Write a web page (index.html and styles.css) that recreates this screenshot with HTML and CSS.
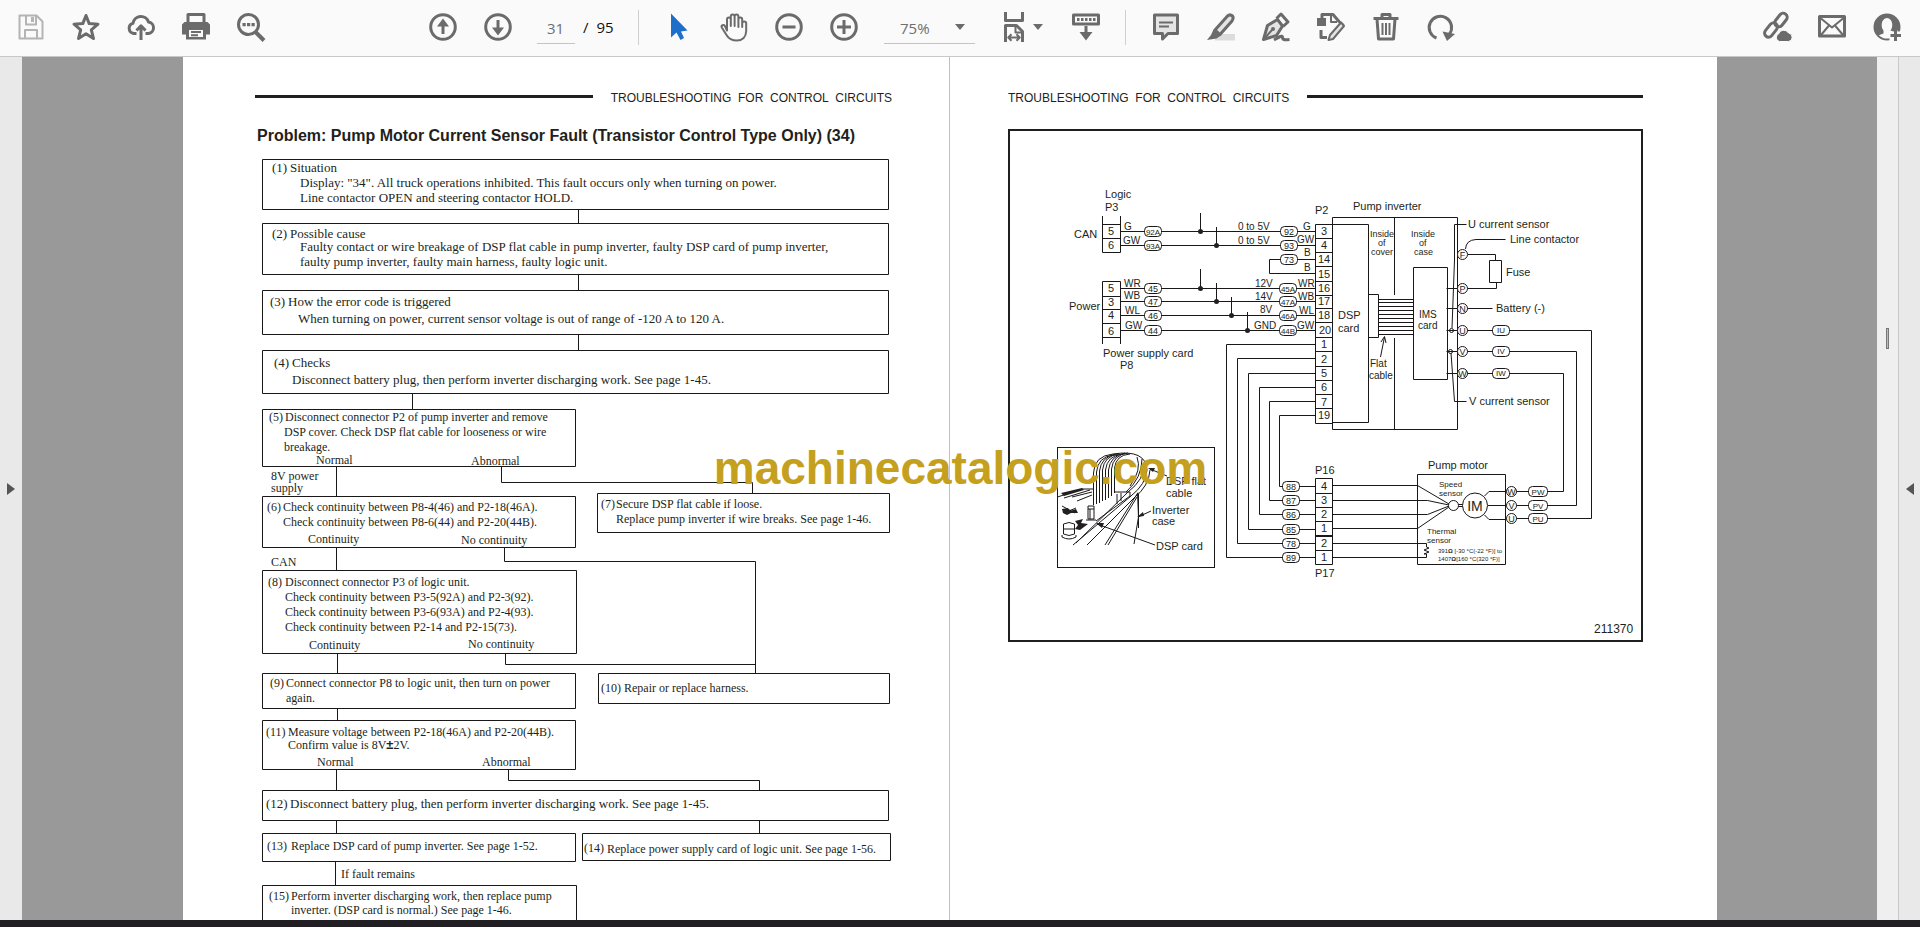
FILE: index.html
```html
<!DOCTYPE html>
<html lang="en">
<head>
<meta charset="utf-8">
<title>Service manual - page 31</title>
<link rel="stylesheet" href="styles.css">
</head>
<body>
<div class="app">
  <header class="toolbar">
    <div class="group">
      <button class="tool tool-off" aria-label="Save"><svg viewBox="0 0 28 28"><path class="ln" d="M2.500 2.500H19.500L25.500 8.500V25.500H2.500Z"/><path class="ln" d="M9 3V11.500H19V3"/><path class="fl" d="M14 4h3v5h-3z"/><path class="ln" d="M8 25V17H20V25"/></svg></button>
      <button class="tool" aria-label="Star"><svg viewBox="0 0 28 28"><path class="ln3" d="M14 2.500L17.200 10.600L26 11.200L19.300 16.800L21.500 25.500L14 20.700L6.500 25.500L8.700 16.800L2 11.200L10.800 10.600Z"/></svg></button>
      <button class="tool" aria-label="Upload to cloud"><svg viewBox="0 0 28 28"><path class="ln3" d="M9.500 20.500H6.500A5.300 5.300 0 0 1 6 10.200A8 8 0 0 1 21.500 9A5.800 5.800 0 0 1 21.500 20.500H18.500"/><path class="ln3" d="M14 27V14M9.500 17.500L14 12.800L18.500 17.500"/></svg></button>
      <button class="tool" aria-label="Print"><svg viewBox="0 0 28 28"><path class="ln3" d="M6 10V1.500H22V10"/><path class="fl" d="M2.500 9H25.500L28 11.500V21.500H24V26.500H4V21.500H0V11.500Z"/><path class="wh" d="M7 17h14v7H7z"/><path class="ln" d="M9 19h10M9 22.200h7"/></svg></button>
      <button class="tool" aria-label="Search"><svg viewBox="0 0 28 28"><circle class="ln3" cx="11.500" cy="11.500" r="10"/><path class="ln4" d="M18.500 19L27 27.500"/><path class="fl" d="M5.500 10h3.200v3.200H5.500zM10 10h3.200v3.200H10zM14.500 10h3.200v3.200h-3.200z"/></svg></button>
    </div>
    <div class="group group-nav">
      <button class="tool" aria-label="Previous page"><svg viewBox="0 0 28 28"><circle class="ln3" cx="14" cy="14" r="12.300"/><path class="ln3" d="M14 21V9"/><path class="fl" d="M14 5.500L20 13.500H8Z"/></svg></button>
      <button class="tool" aria-label="Next page"><svg viewBox="0 0 28 28"><circle class="ln3" cx="14" cy="14" r="12.300"/><path class="ln3" d="M14 7V19"/><path class="fl" d="M14 22.500L20 14.500H8Z"/></svg></button>
      <input class="page-no" type="text" value="31" aria-label="Page number">
      <span class="page-total"><span>/</span><span>95</span></span>
      <span class="sep"></span>
      <button class="tool tool-on" aria-label="Select"><svg viewBox="0 0 28 28"><path class="fl" d="M6 .500V24.500L11.500 19.500L15.500 27L19 25L16 18.500L22.500 17.500Z"/></svg></button>
      <button class="tool" aria-label="Hand"><svg viewBox="0 0 28 28"><path class="ln" d="M7 17.500V6.500a1.900 1.900 0 0 1 3.800 0V13V3.500a1.900 1.900 0 0 1 3.800 0V13V3.500a1.900 1.900 0 0 1 3.800 0V14V6.500a1.900 1.900 0 0 1 3.800 0V14V10.500a2 2 0 0 1 4 0V18C26 24 22.500 27.500 17 27.500C11 27.500 8.500 25.500 6.500 22L1.800 14.500C.800 12.500 3.500 11 5 13Z"/></svg></button>
      <button class="tool" aria-label="Zoom out"><svg viewBox="0 0 28 28"><circle class="ln3" cx="14" cy="14" r="12.300"/><path class="ln3" d="M7.500 14h13"/></svg></button>
      <button class="tool" aria-label="Zoom in"><svg viewBox="0 0 28 28"><circle class="ln3" cx="14" cy="14" r="12.300"/><path class="ln3" d="M7 14h14M14 7v14"/></svg></button>
      <span class="zoom"><select aria-label="Zoom level"><option>75%</option><option>100%</option></select><svg class="caret" viewBox="0 0 10 6"><path class="fl" d="M0 0H10L5 6Z"/></svg></span>
      <button class="tool tool-fit" aria-label="Page fit"><svg viewBox="0 0 28 28"><path class="ln3" d="M4.500 -1V7.500H21.500V-1"/><path class="ln3" d="M4.500 29V12.500H15.500L21.500 18.500V29"/><path class="ln" d="M14.500 13v6.500H21M7.500 24.500h11M10.500 21.300L7.300 24.500L10.500 27.700M15.500 21.300L18.700 24.500L15.500 27.700"/></svg><svg class="caret" viewBox="0 0 10 6"><path class="fl" d="M0 0H10L5 6Z"/></svg></button>
      <button class="tool" aria-label="Scroll mode"><svg viewBox="0 0 28 28"><rect class="ln3" x="1.500" y="2" width="25" height="9"/><path class="fl" d="M5 5h2.500v3H5zM9 5h2.500v3H9zM13 5h2.500v3H13zM17 5h2.500v3H17zM21 5h2.500v3H21z"/><path class="ln3" d="M14 13V23"/><path class="fl" d="M7.500 19H20.500L14 27.500Z"/></svg></button>
      <span class="sep"></span>
      <button class="tool" aria-label="Comment"><svg viewBox="0 0 28 28"><path class="ln3 lt" d="M2.500 2H25.500V20.500H16L10.500 26V20.500H2.500Z"/><path class="ln" d="M7 9.500h14M7 13.500h10"/></svg></button>
      <button class="tool" aria-label="Highlight"><svg viewBox="0 0 28 28"><path class="pale" d="M8 21H28V27.500H8Z"/><path class="ln3 lt" d="M8 17L20.500 3Q23 .800 25.500 3Q27 5 25 8L13 21.500Z"/><path class="fl" d="M6.500 16.500L14 22.500L9.500 25.500L0 27L4 22Z"/></svg></button>
      <button class="tool" aria-label="Sign"><svg viewBox="0 0 28 28"><path class="ln3 lt" d="M1.500 26.500L5.500 12.500L15.500 6.500L20.500 13L14.500 22.500Z"/><path class="ln3" d="M14.500 5.500L19 1L26 9L21 13.500"/><path class="ln" d="M2 26L10 17"/><circle class="fl" cx="11" cy="16" r="2"/><path class="ln3" d="M12 27C17 24 20 22 20.500 24C20.500 27 22 27 27.500 26.500"/></svg></button>
      <button class="tool" aria-label="Edit file"><svg viewBox="0 0 28 28"><path class="ln3" d="M5 5V1.500H16L22 8.500L26.500 12.500"/><path class="fl" d="M0 5H9V13H0z"/><path class="ln" d="M14 2V9H20"/><path class="ln3" d="M4 17V24.500H10"/><path class="ln lt" d="M13 22L24 9.500L27 13L16 26L11.500 27Z"/></svg></button>
      <button class="tool" aria-label="Delete"><svg viewBox="0 0 28 28"><path class="ln3" d="M1.500 5.500H26.500M10 5V1.500H18V5M5 6L6.500 26H21.500L23 6"/><path class="ln" d="M10.500 10V22M14 10V22M17.500 10V22"/></svg></button>
      <button class="tool" aria-label="Rotate"><svg viewBox="0 0 28 28"><path class="ln3" d="M9.500 25A11.200 11.200 0 1 1 22.500 21"/><path class="fl" d="M15.500 18.500L28 21L20 28Z"/></svg></button>
    </div>
    <div class="group group-end">
      <button class="tool" aria-label="Share link"><svg viewBox="0 0 28 28"><rect class="ln3" x="10.500" y="3" width="15" height="8" rx="4" transform="rotate(-52 18 7)"/><rect class="ln3" x="0" y="13" width="16" height="8" rx="4" transform="rotate(-52 8 17)"/><path class="fl" stroke="#fafafa" d="M16.500 28.500A4 4 0 0 1 15.500 21A5.500 5.500 0 0 1 25.500 20A4.300 4.300 0 0 1 25.500 28.500Z"/></svg></button>
      <button class="tool" aria-label="E-mail"><svg viewBox="0 0 28 28"><path class="ln3" d="M1.500 3.500H26.500V23H1.500Z"/><path class="ln" d="M3 5.500L14 14.500L25 5.500M3 22L11 12.500M25 22L17 12.500"/></svg></button>
      <button class="tool" aria-label="Add people"><svg viewBox="0 0 28 28"><circle class="ln" cx="14" cy="14" r="12.500"/><path class="fl" d="M11 26C3 24 .500 18 1.500 12C2.500 5 8 1 14 1.500C21 1 26 6 26.500 13L26 17L21 19L17.500 17.500C20.500 14 20 5.500 14 5C8 5.500 7.500 14 10.500 17.500V20.500L5 22.500Z"/><path class="wh" d="M16.500 18.500H28V28H16.500z"/><path class="ln3" d="M22.500 17.500V28M17.500 22.500H28"/></svg></button>
    </div>
  </header>

  <main class="workspace">
    <button class="rail" aria-label="Open left pane"><svg viewBox="0 0 8 12"><path class="fl" d="M0 0V12L8 6Z"/></svg></button>
    <div class="viewport">
      <article class="page page-left">
        <div class="running-head"><span class="rule"></span><span>TROUBLESHOOTING&nbsp; FOR&nbsp; CONTROL&nbsp; CIRCUITS</span></div>
        <h1 class="title">Problem: Pump Motor Current Sensor Fault (Transistor Control Type Only) (34)</h1>
        <svg class="figure flow" viewBox="255 157 637 763" role="img" aria-label="Troubleshooting flowchart">
          <g class="box">
            <path d="M262.500 159.500H888.500V209.500H262.500ZM262.500 223.500H888.500V274.500H262.500ZM262.500 290.500H888.500V334.500H262.500ZM262.500 350.500H888.500V393.500H262.500Z"/>
            <path d="M262.500 409.500H575.500V466.500H262.500ZM262.500 496.500H575.500V547.500H262.500ZM597.500 493.500H889.500V532.500H597.500ZM262.500 570.500H576.500V653.500H262.500Z"/>
            <path d="M262.500 673.500H575.500V708.500H262.500ZM598.500 673.500H889.500V703.500H598.500ZM262.500 720.500H575.500V769.500H262.500ZM262.500 790.500H888.500V820.500H262.500Z"/>
            <path d="M262.500 833.500H575.500V861.500H262.500ZM582.500 833.500H890.500V860.500H582.500ZM262.500 885.500H576.500V930H262.500Z"/>
            <path d="M578.500 209.500V223.500M578.500 274.500V290.500M578.500 334.500V350.500M412.500 393.500V409.500M336.500 466.500V496.500M501.500 466.500V482.500H752.500V493.500"/>
            <path d="M336.500 547.500V570.500M504.500 547.500V561.500H755.500V673.500M337.500 653.500V673.500M505.500 653.500V664.500H755.500M337.500 708.500V720.500"/>
            <path d="M336.500 769.500V790.500M508.500 769.500V780.500H759.500V790.500M336.500 820.500V833.500M759.500 820.500V833.500M335.500 861.500V885.500"/>
          </g>
          <g class="wide">
            <text x="272" y="172">(1)</text><text x="290" y="172">Situation</text>
            <text x="300" y="187">Display: "34". All truck operations inhibited. This fault occurs only when turning on power.</text>
            <text x="300" y="202">Line contactor OPEN and steering contactor HOLD.</text>
            <text x="272" y="238">(2)</text><text x="290" y="238">Possible cause</text>
            <text x="300" y="251">Faulty contact or wire breakage of DSP flat cable in pump inverter, faulty DSP card of pump inverter,</text>
            <text x="300" y="266">faulty pump inverter, faulty main harness, faulty logic unit.</text>
            <text x="270" y="306">(3)</text><text x="288" y="306">How the error code is triggered</text>
            <text x="298" y="323">When turning on power, current sensor voltage is out of range of -120 A to 120 A.</text>
            <text x="274" y="367">(4)</text><text x="292" y="367">Checks</text>
            <text x="292" y="384">Disconnect battery plug, then perform inverter discharging work. See page 1-45.</text>
            <text x="266" y="808">(12)</text><text x="290" y="808">Disconnect battery plug, then perform inverter discharging work. See page 1-45.</text>
          </g>
          <g>
            <text x="269" y="421">(5)</text><text x="285" y="421">Disconnect connector P2 of pump inverter and remove</text>
            <text x="284" y="436">DSP cover. Check DSP flat cable for looseness or wire</text>
            <text x="284" y="451">breakage.</text>
            <text x="316" y="464">Normal</text><text x="471" y="465">Abnormal</text>
            <text x="271" y="480">8V power</text><text x="271" y="492">supply</text>
            <text x="267" y="511">(6)</text><text x="283" y="511">Check continuity between P8-4(46) and P2-18(46A).</text>
            <text x="283" y="526">Check continuity between P8-6(44) and P2-20(44B).</text>
            <text x="308" y="543">Continuity</text><text x="461" y="544">No continuity</text>
            <text x="601" y="508">(7)</text><text x="616" y="508">Secure DSP flat cable if loose.</text>
            <text x="616" y="523">Replace pump inverter if wire breaks. See page 1-46.</text>
            <text x="271" y="566">CAN</text>
            <text x="268" y="586">(8)</text><text x="285" y="586">Disconnect connector P3 of logic unit.</text>
            <text x="285" y="601">Check continuity between P3-5(92A) and P2-3(92).</text>
            <text x="285" y="616">Check continuity between P3-6(93A) and P2-4(93).</text>
            <text x="285" y="631">Check continuity between P2-14 and P2-15(73).</text>
            <text x="309" y="649">Continuity</text><text x="468" y="648">No continuity</text>
            <text x="270" y="687">(9)</text><text x="286" y="687">Connect connector P8 to logic unit, then turn on power</text>
            <text x="286" y="702">again.</text>
            <text x="601" y="692">(10)</text><text x="624" y="692">Repair or replace harness.</text>
            <text x="266" y="736">(11)</text><text x="288" y="736">Measure voltage between P2-18(46A) and P2-20(44B).</text>
            <text x="288" y="749">Confirm value is 8V<tspan class="pm">±</tspan>2V.</text>
            <text x="317" y="766">Normal</text><text x="482" y="766">Abnormal</text>
            <text x="267" y="850">(13)</text><text x="291" y="850">Replace DSP card of pump inverter. See page 1-52.</text>
            <text x="584" y="852">(14)</text><text x="607" y="853">Replace power supply card of logic unit. See page 1-56.</text>
            <text x="341" y="878">If fault remains</text>
            <text x="269" y="900">(15)</text><text x="291" y="900">Perform inverter discharging work, then replace pump</text>
            <text x="291" y="914">inverter. (DSP card is normal.) See page 1-46.</text>
          </g>
        </svg>
      </article>
      <article class="page page-right">
        <div class="running-head"><span>TROUBLESHOOTING&nbsp; FOR&nbsp; CONTROL&nbsp; CIRCUITS</span><span class="rule"></span></div>
        <svg class="figure circuit" viewBox="1008 128 635 515" role="img" aria-label="Pump inverter circuit diagram">
          <rect class="frame" x="1009" y="130" width="633" height="511"/>
          <g class="wire">
            <path d="M1102.500 216V252.500H1120.500V216M1102.500 224.500H1120.500M1102.500 238.500H1120.500"/>
            <path d="M1102.500 344V281.500H1120.500V344M1102.500 296.500H1120.500M1102.500 309.500H1120.500M1102.500 323.500H1120.500M1102.500 337.500H1120.500"/>
            <path d="M1120.500 231.500H1315.500M1120.500 245.500H1315.500M1315.500 259.500H1269.500V273.500H1315.500M1120.500 288.500H1315.500M1120.500 301.500H1315.500M1120.500 315.500H1315.500M1120.500 330.500H1315.500"/>
            <path d="M1200.500 213V231M1216.500 227V245M1200.500 269V288M1216.500 283V301M1231.500 297V315M1247.500 312V330"/>
            <path d="M1315.500 224.500H1332.500V423.500H1315.500ZM1315.500 238.500h17M1315.500 252.500h17M1315.500 266.500h17M1315.500 281.500h17M1315.500 295.500h17M1315.500 308.500h17M1315.500 322.500h17M1315.500 337.500h17M1315.500 351.500h17M1315.500 366.500h17M1315.500 380.500h17M1315.500 394.500h17M1315.500 408.500h17"/>
            <path d="M1315.500 344.500H1226.500V557.500H1315.500M1315.500 358.500H1237.500V543.500H1315.500M1315.500 373.500H1248.500V529.500H1315.500M1315.500 387.500H1259.500V514.500H1315.500M1315.500 401.500H1269.500V500.500H1315.500M1315.500 415.500H1279.500V486.500H1315.500"/>
            <path d="M1315.500 478.500H1332.500V564.500H1315.500ZM1315.500 493.500h17M1315.500 507.500h17M1315.500 521.500h17M1315.500 535.500h17M1315.500 536.500h17M1315.500 550.500h17"/>
            <path d="M1332.500 217.500H1457.500V429.500H1332.500ZM1332.500 224.500H1368.500V422.500H1332.500M1394.500 217.500V295M1394.500 338V429.500M1368.500 294.500H1378.500V337.500H1368.500M1413.500 267.500H1447.500V379.500H1413.500Z"/>
            <path d="M1378.500 299.500h35M1378.500 302.500h35M1378.500 306.500h35M1378.500 310.500h35M1378.500 314.500h35M1378.500 318.500h35M1378.500 322.500h35M1378.500 326.500h35M1378.500 330.500h35M1378.500 334.500h35"/>
            <path d="M1380.500 357L1384.500 337M1381 342L1384.500 336.500L1386 343"/>
            <path d="M1466.500 224.500H1454.500V260L1452 328M1466.500 401.500H1454.500L1451 353M1505.500 239.500H1476Q1466 240 1465.500 249"/>
            <path d="M1468 254.500H1495.500V260.500M1489.500 260.500H1501.500V282.500H1489.500ZM1446.500 288.500H1496.500V282.500M1446.500 308.500H1492.500M1446.500 330.500H1591.500V518.500H1506M1446.500 351.500H1576.500V505.500H1488M1446.500 373.500H1563.500V491.500H1489L1484.500 496M1506 519.500H1489L1484.500 515"/>
            <circle cx="1451.500" cy="330.500" r="2"/><circle cx="1450.500" cy="351.500" r="2"/>
            <path d="M1417.500 474.500H1505.500V564.500H1417.500ZM1332.500 485.500H1417.500L1449 504M1332.500 500.500H1427.500L1449 505M1332.500 514.500H1427.500L1449 506M1332.500 528.500H1417.500L1449 507"/>
            <path d="M1458 504.500H1463M1458 506.500H1463M1332.500 543.500H1426.500V547L1429 548L1424 550L1429 552L1424 554H1426.500V557.500H1332.500"/>
          </g>
          <g class="dot"><circle cx="1200.500" cy="231.500" r="2.500"/><circle cx="1216.500" cy="245.500" r="2.500"/><circle cx="1200.500" cy="288.500" r="2.500"/><circle cx="1216.500" cy="301.500" r="2.500"/><circle cx="1231.500" cy="315.500" r="2.500"/><circle cx="1247.500" cy="330.500" r="2.500"/></g>
          <g class="node">
            <rect x="1144.500" y="226.500" width="17" height="10" rx="4"/><rect x="1144.500" y="240.500" width="17" height="10" rx="4"/>
            <rect x="1144.500" y="283.500" width="17" height="10" rx="4"/><rect x="1144.500" y="296.500" width="17" height="10" rx="4"/><rect x="1144.500" y="310.500" width="17" height="10" rx="4"/><rect x="1144.500" y="325.500" width="17" height="10" rx="4"/>
            <rect x="1280.500" y="226.500" width="17" height="10" rx="4"/><rect x="1280.500" y="240.500" width="17" height="10" rx="4"/><rect x="1280.500" y="254.500" width="17" height="10" rx="4"/>
            <rect x="1279.500" y="283.500" width="17" height="10" rx="4"/><rect x="1279.500" y="296.500" width="17" height="10" rx="4"/><rect x="1279.500" y="310.500" width="17" height="10" rx="4"/><rect x="1279.500" y="325.500" width="17" height="10" rx="4"/>
            <rect x="1282.500" y="481.500" width="17" height="10" rx="4"/><rect x="1282.500" y="495.500" width="17" height="10" rx="4"/><rect x="1282.500" y="509.500" width="17" height="10" rx="4"/><rect x="1282.500" y="524.500" width="17" height="10" rx="4"/><rect x="1282.500" y="538.500" width="17" height="10" rx="4"/><rect x="1282.500" y="552.500" width="17" height="10" rx="4"/>
            <rect x="1492.500" y="325.500" width="17" height="10" rx="4"/><rect x="1492.500" y="346.500" width="17" height="10" rx="4"/><rect x="1492.500" y="368.500" width="17" height="10" rx="4"/>
            <rect x="1528.500" y="486.500" width="19" height="10" rx="4"/><rect x="1528.500" y="500.500" width="19" height="10" rx="4"/><rect x="1528.500" y="513.500" width="19" height="10" rx="4"/>
            <circle cx="1462.500" cy="254.500" r="5"/><circle cx="1462.500" cy="288.500" r="5"/><circle cx="1462.500" cy="308.500" r="5"/><circle cx="1462.500" cy="330.500" r="5"/><circle cx="1462.500" cy="351.500" r="5"/><circle cx="1462.500" cy="373.500" r="5"/>
            <circle cx="1511.500" cy="491.500" r="5"/><circle cx="1511.500" cy="505.500" r="5"/><circle cx="1511.500" cy="518.500" r="5"/>
            <circle cx="1453.500" cy="505.500" r="5"/><circle cx="1475" cy="505.500" r="12.500"/>
          </g>
          <g class="t9 mid">
            <text x="1153" y="292">45</text><text x="1153" y="305">47</text><text x="1153" y="319">46</text><text x="1153" y="334">44</text>
            <text x="1289" y="235">92</text><text x="1289" y="249">93</text><text x="1289" y="263">73</text>
            <text x="1291" y="490">88</text><text x="1291" y="504">87</text><text x="1291" y="518">86</text><text x="1291" y="533">85</text><text x="1291" y="547">78</text><text x="1291" y="561">89</text>
          </g>
          <g class="t8 mid">
            <text x="1153" y="235">92A</text><text x="1153" y="249">93A</text>
            <text x="1288" y="292">45A</text><text x="1288" y="305">47A</text><text x="1288" y="319">46A</text><text x="1288" y="334">44B</text>
            <text x="1501" y="333">IU</text><text x="1501" y="354">IV</text><text x="1501" y="376">IW</text>
            <text x="1538" y="495">PW</text><text x="1538" y="509">PV</text><text x="1538" y="522">PU</text>
          </g>
          <g class="t9 mid">
            <text x="1462.500" y="258">F</text><text x="1462.500" y="292">P</text><text x="1462.500" y="312">N</text><text x="1462.500" y="334">U</text><text x="1462.500" y="355">V</text><text x="1462.500" y="377">W</text>
            <text x="1511.500" y="495">W</text><text x="1511.500" y="509">V</text><text x="1511.500" y="522">U</text>
          </g>
          <g class="t11 mid">
            <text x="1111" y="235">5</text><text x="1111" y="249">6</text><text x="1111" y="292">5</text><text x="1111" y="306">3</text><text x="1111" y="319">4</text><text x="1111" y="335">6</text>
            <text x="1324" y="235">3</text><text x="1324" y="249">4</text><text x="1324" y="263">14</text><text x="1324" y="278">15</text><text x="1324" y="292">16</text><text x="1324" y="305">17</text><text x="1324" y="319">18</text><text x="1325" y="334">20</text><text x="1324" y="348">1</text><text x="1324" y="363">2</text><text x="1324" y="377">5</text><text x="1324" y="391">6</text><text x="1324" y="406">7</text><text x="1324" y="419">19</text>
            <text x="1324" y="490">4</text><text x="1324" y="504">3</text><text x="1324" y="518">2</text><text x="1324" y="532">1</text><text x="1324" y="547">2</text><text x="1324" y="561">1</text>
          </g>
          <g class="t10">
            <text x="1124" y="230">G</text><text x="1123" y="244">GW</text><text x="1124" y="287">WR</text><text x="1124" y="299">WB</text><text x="1125" y="314">WL</text><text x="1125" y="329">GW</text>
            <text x="1238" y="230">0 to 5V</text><text x="1238" y="244">0 to 5V</text><text x="1255" y="287">12V</text><text x="1255" y="300">14V</text><text x="1260" y="313">8V</text><text x="1254" y="329">GND</text>
            <text x="1303" y="230">G</text><text x="1297" y="243">GW</text><text x="1304" y="256">B</text><text x="1304" y="271">B</text><text x="1298" y="287">WR</text><text x="1298" y="300">WB</text><text x="1299" y="314">WL</text><text x="1297" y="329">GW</text>
            <text x="1419" y="318">IMS</text><text x="1418" y="329">card</text><text x="1370" y="367">Flat</text><text x="1369" y="379">cable</text>
          </g>
          <g class="t9"><text x="1370" y="237">Inside</text><text x="1378" y="246">of</text><text x="1371" y="255">cover</text><text x="1411" y="237">Inside</text><text x="1419" y="246">of</text><text x="1414" y="255">case</text></g>
          <g class="t11">
            <text x="1105" y="198">Logic</text><text x="1105" y="211">P3</text><text x="1074" y="238">CAN</text><text x="1069" y="310">Power</text><text x="1103" y="357">Power supply card</text><text x="1120" y="369">P8</text>
            <text x="1315" y="214">P2</text><text x="1353" y="210">Pump inverter</text><text x="1338" y="319">DSP</text><text x="1338" y="332">card</text>
            <text x="1468" y="228">U current sensor</text><text x="1510" y="243">Line contactor</text><text x="1506" y="276">Fuse</text><text x="1496" y="312">Battery (-)</text><text x="1469" y="405">V current sensor</text>
            <text x="1315" y="474">P16</text><text x="1315" y="577">P17</text><text x="1428" y="469">Pump motor</text>
          </g>
          <text class="t14 mid" x="1475" y="511">IM</text>
          <text class="t12" x="1594" y="633">211370</text>
          <g class="t8"><text x="1439" y="487">Speed</text><text x="1439" y="496">sensor</text><text x="1427" y="534">Thermal</text><text x="1427" y="543">sensor</text></g>
          <g class="t6"><text x="1438" y="553">391<tspan class="b">Ω</tspan> [-30 <tspan class="b">°</tspan>C(-22 <tspan class="b">°</tspan>F)] to</text><text x="1438" y="561">1407<tspan class="b">Ω</tspan>[160 <tspan class="b">°</tspan>C(320 <tspan class="b">°</tspan>F)]</text></g>

          <g class="wire">
            <rect x="1057.500" y="447.500" width="157" height="120"/>
            <path d="M1093.500 505V473Q1094 456 1113 454Q1146 449 1147 470Q1146 484 1131 496L1073 545M1096.500 504V472Q1098 457 1113 455M1099.500 503V471Q1101 457 1116 454M1102.500 501V470Q1104 456 1119 454M1105.500 500V470Q1107 456 1122 454M1108.500 498V470Q1110 456 1125 453M1111.500 496V469Q1113 455 1128 453M1114.500 493V468Q1116 455 1130 454"/>
            <path d="M1145 463Q1144 480 1128 492L1076 543M1142 459Q1142 478 1126 492M1137 457Q1142 470 1130 486M1150 470Q1149 486 1134 498M1114 492H1130V496L1096 521M1117 494V504M1121 493V501"/>
            <path d="M1087 545L1137 495M1105 545L1138 492.500M1108 545L1137 497M1137.500 493L1138.500 517L1134 544M1138.500 494V528"/>
            <path d="M1057.500 497L1082 489H1093M1064 498L1090 490M1072 497L1092 492M1077 501L1092 495M1088 506H1094V519H1088ZM1088 509H1094M1090 509V519M1086 520H1096"/>
            <path d="M1063.500 524V534Q1069 537 1074.500 534V524Q1069 521 1063.500 524ZM1063.500 529H1074.500M1062 535V537Q1069 541 1076 537V535M1062 506L1075 513M1064 513L1076 508"/>
            <path d="M1167 476L1150 469M1151 511L1138 517M1155 545L1097 524"/>
          </g>
          <path class="ink" d="M1148 468L1155 468L1153 472ZM1137 517L1143 512L1144 516ZM1096 523L1104 523L1102 528ZM1062 509L1068 508L1070 511L1076 509L1078 513L1071 513L1067 515L1063 513ZM1075 521L1083 519L1081 523L1088 524L1080 530L1075 529L1078 525ZM1061 493L1082 488L1084 490L1064 496Z"/>
          <g class="t11"><text x="1166" y="485">DSP flat</text><text x="1166" y="497">cable</text><text x="1152" y="514">Inverter</text><text x="1152" y="525">case</text><text x="1156" y="550">DSP card</text></g>
        </svg>
      </article>
      <div class="watermark">machinecatalogic.com</div>
    </div>
    <div class="scrollbar"><span class="thumb"></span></div>
    <button class="rail rail-right" aria-label="Open right pane"><svg viewBox="0 0 8 12"><path class="fl" d="M8 0V12L0 6Z"/></svg></button>
  </main>
  <footer class="taskbar"></footer>
</div>
</body>
</html>
```
FILE: styles.css
```css
* { box-sizing: border-box; }
body { margin: 0; background: #999; font-family: "Liberation Sans", Arial, sans-serif; color: #231f20; }
button { border: 0; padding: 0; background: none; cursor: pointer; }
.app { display: flex; flex-direction: column; height: 100vh; overflow: hidden; }

.toolbar { flex: none; display: flex; align-items: center; height: 57px; padding: 0 6px 2px 3px; background: #fafafa; border-bottom: 1px solid #c8c8c8; }
.group { display: flex; align-items: center; flex: none; }
.group-nav { margin-left: 137px; }
.group-end { margin-left: auto; }
.tool { display: flex; align-items: center; justify-content: center; width: 55px; height: 44px; color: #6b6b6b; }
.tool svg { width: 28px; height: 28px; overflow: visible; }
.tool-off { color: #b4b4b4; }
.tool-on { color: #1d6fc9; }
.fl { fill: currentColor; }
.ln, .ln3, .ln4 { fill: none; stroke: currentColor; stroke-width: 2; stroke-linejoin: round; }
.ln3 { stroke-width: 3; }
.ln4 { stroke-width: 4; }
.lt { fill: #e4e4e4; }
.pale { fill: #dcdcdc; }
.wh { fill: #fafafa; }
.tool .caret, .caret { width: 10px; height: 6px; color: #6b6b6b; }
.tool-fit { width: 50px; gap: 4px; margin: 0 11px 0 22px; }
.page-no { width: 38px; height: 34px; margin-left: 12px; padding: 2px 0 0 10px; border: 0; border-bottom: 1px solid #c4c4c4; background: none; font: 15px "Open Sans", sans-serif; color: #6e6e6e; }
.page-total { display: flex; gap: 8px; margin-left: 8px; width: 40px; font: 15px "Open Sans", sans-serif; color: #111; }
.sep { width: 1px; height: 35px; margin: 0 12px; background: #cfcfcf; }
.page-total + .sep { margin-left: 15px; }
.zoom { position: relative; margin-left: 13px; width: 91px; }
.zoom select { width: 100%; height: 34px; padding: 2px 0 0 16px; appearance: none; border: 0; border-bottom: 1px solid #c4c4c4; border-radius: 0; background: none; font: 15px "Open Sans", sans-serif; color: #6e6e6e; }
.zoom .caret { position: absolute; right: 10px; top: 14px; pointer-events: none; }

.workspace { flex: 1; min-height: 0; display: flex; }
.rail { flex: none; width: 22px; display: flex; align-items: center; justify-content: center; background: #e9e9e9; color: #555; }
.rail svg { width: 8px; height: 12px; }
.rail-right { border-left: 1px solid #c8c8c8; }
.viewport { position: relative; flex: 1; min-width: 0; display: grid; grid-template-columns: minmax(0, 1fr) minmax(0, 1fr); padding: 0 160px 0 161px; background: #999; overflow: hidden; }
.page { min-width: 0; background: #fff; padding-top: 33px; }
.page-left { padding-left: 72px; padding-right: 57px; border-right: 1px solid #c0c0c0; }
.page-right { padding-left: 58px; padding-right: 74px; }
.running-head { display: flex; gap: 18px; font-size: 12px; line-height: 16px; white-space: nowrap; }
.rule { flex: 1; height: 3px; margin-top: 5px; background: #1e2020; }
.title { margin: 20px 0 11px 2px; font-size: 16px; line-height: 20px; font-weight: bold; white-space: nowrap; }
.figure { display: block; width: 100%; height: auto; }
.page-right .figure { margin-top: 22px; }

.flow text { font: 12px "Liberation Serif", "Times New Roman", serif; fill: #231f20; }
.flow .wide text { font-size: 13px; }
.flow .pm { font: bold 13px "Liberation Sans", Arial, sans-serif; }
.box path, .wire, .node { fill: none; stroke: #1a1718; stroke-width: 1; }
.node { fill: #fff; }
.frame { fill: none; stroke: #1e2020; stroke-width: 2; }
.dot, .ink, .circuit text { fill: #231f20; }
.mid { text-anchor: middle; }
.t6 { font-size: 6px; }
.t8 { font-size: 8px; }
.t9 { font-size: 9px; }
.t10 { font-size: 10px; }
.t11 { font-size: 11px; }
.t12 { font-size: 12px; }
.t14 { font-size: 14px; }
.b { font-weight: bold; }

.watermark { position: absolute; left: 0; right: 0; top: 384px; text-align: center; font-size: 46px; line-height: 54px; font-weight: bold; color: #c4a01e; pointer-events: none; padding-left: 22px; }
.scrollbar { flex: none; display: flex; justify-content: center; width: 21px; padding-top: 271px; background: #efefef; }
.thumb { width: 3px; height: 21px; border: 1px solid #777; background: #bbb; }
.taskbar { flex: none; height: 7px; background: #211f24; }
```
